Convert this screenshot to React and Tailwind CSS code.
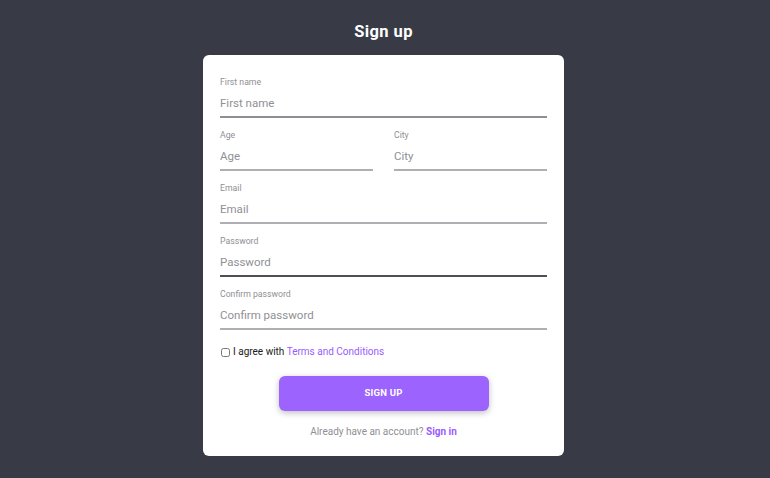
import { useState } from 'react';

function Field({ label, line, className = '' }) {
  return (
    <div className={`flex flex-col min-w-0 ${className}`}>
      <label className="text-[8.7px] leading-[12px] text-[#8f8f94]">{label}</label>
      <input
        placeholder={label}
        className={`w-full min-w-0 h-[30px] pt-[2px] text-[11.5px] text-[#333] placeholder:text-[#909095] outline-none border-b-2 ${line} bg-transparent`}
      />
    </div>
  );
}

export default function App() {
  const [agree, setAgree] = useState(false);
  return (
    <div className="w-[770px] h-[478px] pr-[3px] bg-[#383b45] flex flex-col items-center font-['Roboto',sans-serif]">
      <h1 className="mt-[22px] text-[16.5px] leading-[20px] font-bold text-white tracking-[0.4px]">Sign up</h1>
      <div className="mt-[13px] w-[361px] bg-white rounded-[6px] px-[17px] pt-[21px] pb-[18px]">
        <div className="flex flex-col gap-[11px]">
          <Field label="First name" line="border-[#8e8e95]" />
          <div className="flex gap-[21px]">
            <Field label="Age" line="border-[#aeaeb3]" className="flex-1" />
            <Field label="City" line="border-[#aeaeb3]" className="flex-1" />
          </div>
          <Field label="Email" line="border-[#aeaeb3]" />
          <Field label="Password" line="border-[#4c4e58]" />
          <Field label="Confirm password" line="border-[#aeaeb3]" />
        </div>
        <label className="mt-[15px] flex items-center gap-[2px] text-[10px] leading-[14px] text-[#1a1a1a]">
          <input
            type="checkbox"
            checked={agree}
            onChange={e => setAgree(e.target.checked)}
            className="w-[9px] h-[9px] m-0 ml-[1px] mr-[1px]"
          />
          <span>I agree with <a className="text-[#9a5cff]">Terms and Conditions</a></span>
        </label>
        <div className="flex justify-center mt-[17px]">
          <button className="w-[210px] h-[35px] rounded-[6px] bg-[#9c63ff] text-white text-[9.5px] font-bold tracking-[0.2px] shadow-[0_2px_6px_rgba(0,0,0,0.25)]">
            SIGN UP
          </button>
        </div>
        <p className="mt-[14px] text-center text-[10px] leading-[13px] text-[#8f8f94]">
          Already have an account? <a className="text-[#9a5cff] font-bold">Sign in</a>
        </p>
      </div>
    </div>
  );
}
